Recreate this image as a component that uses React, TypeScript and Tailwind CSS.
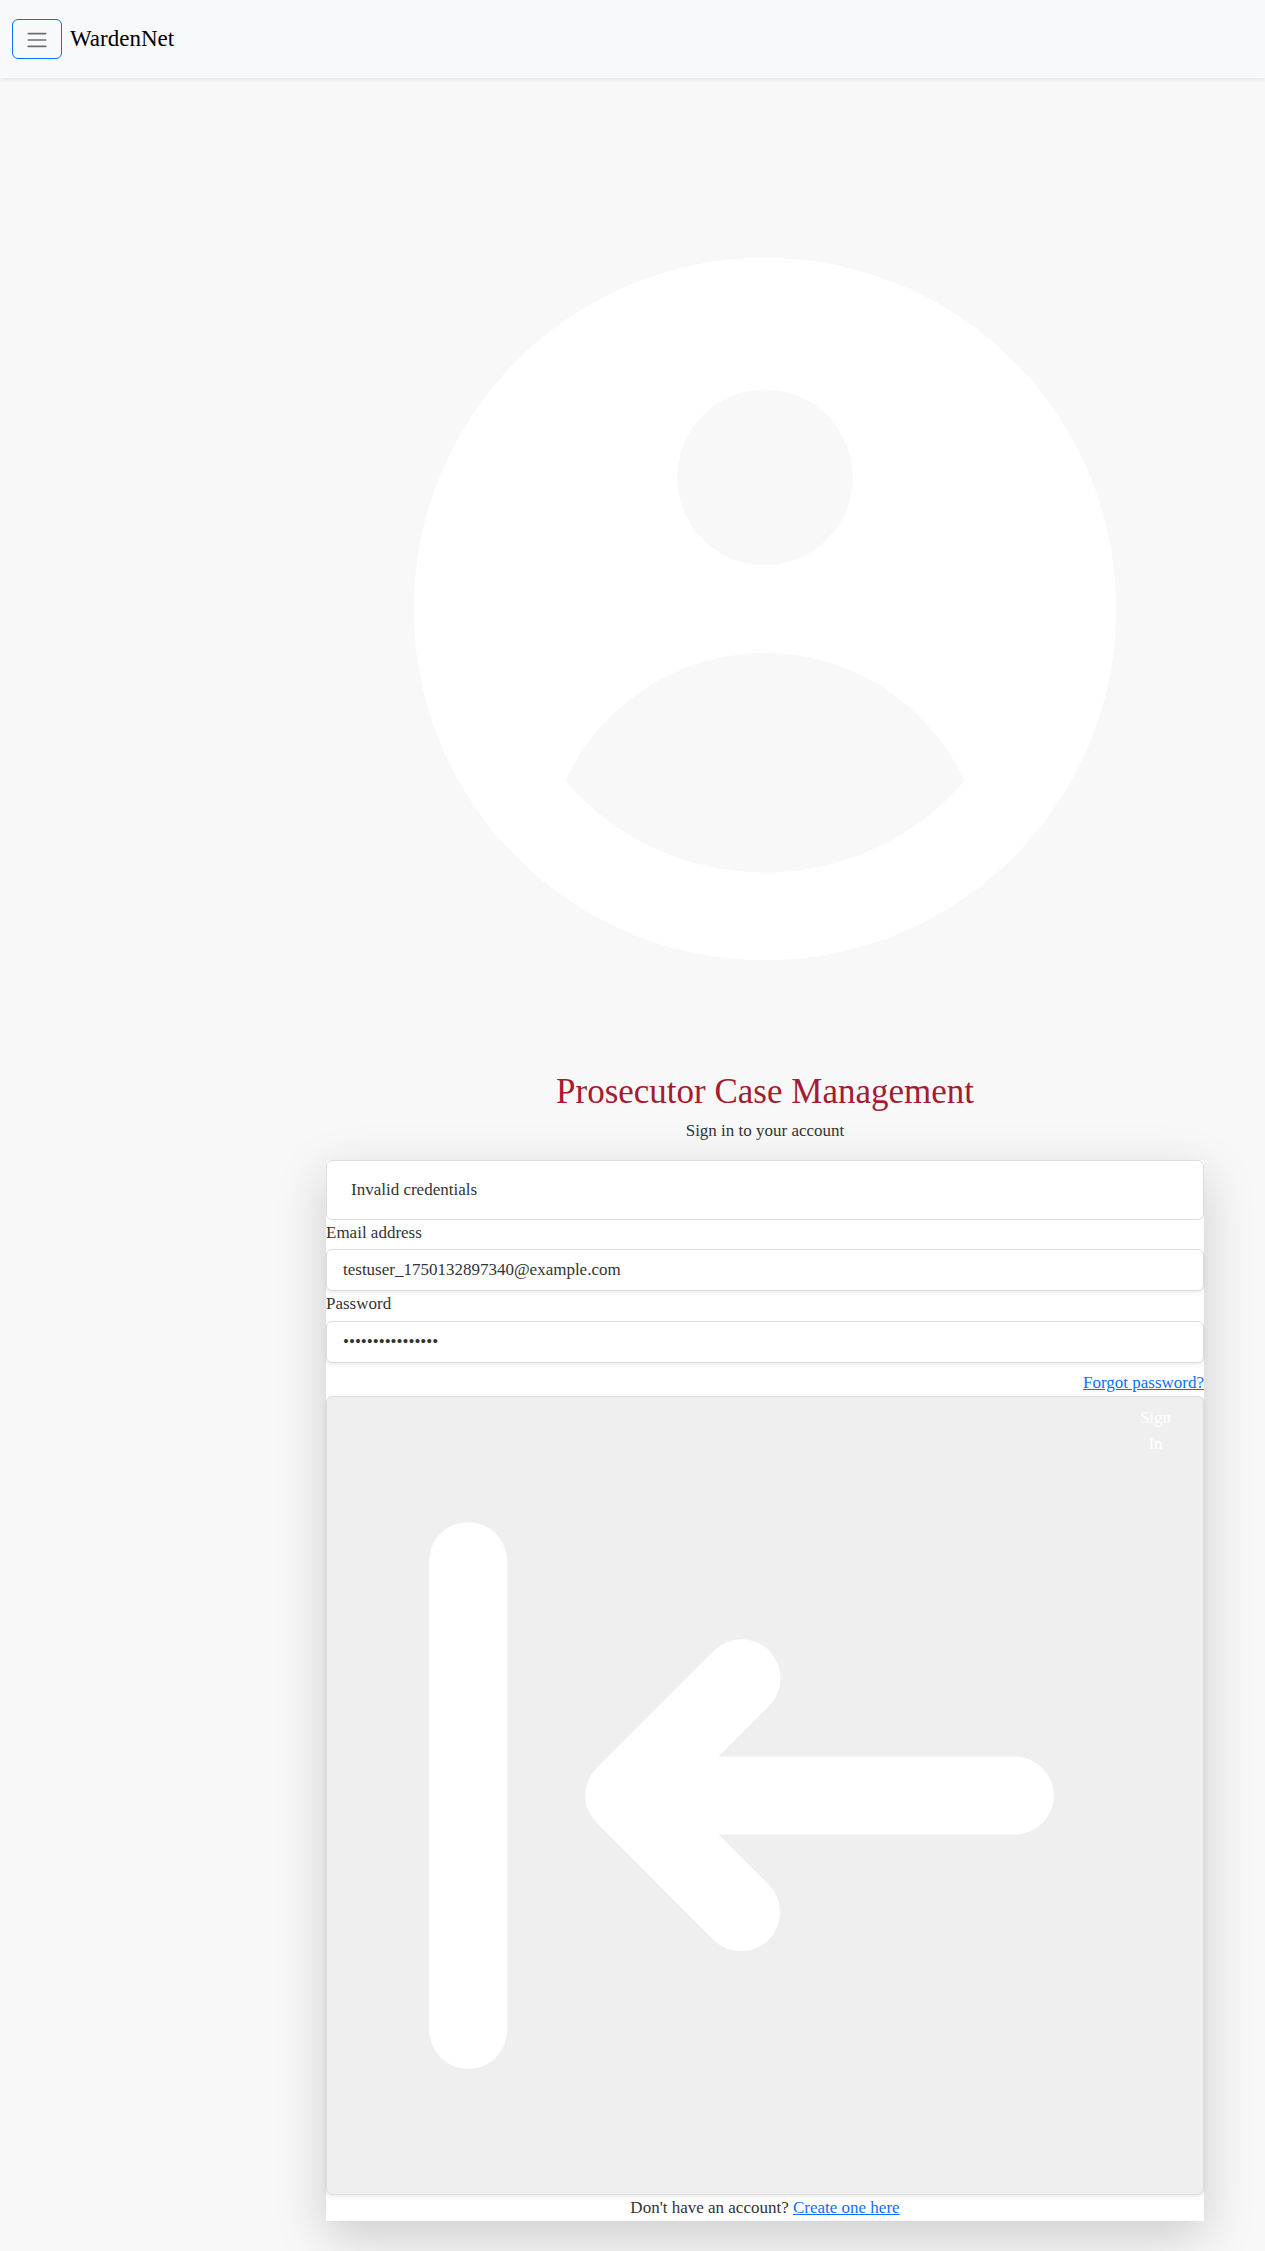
import { useState } from 'react';

const field =
  'block h-[42px] w-full rounded-md border border-[#dddddd] bg-white px-4 text-[17px] leading-[26px] text-[#333333] shadow-[0_2px_4px_rgba(0,0,0,0.075)] outline-none';

function Navbar() {
  return (
    <header className="relative z-10 flex h-[78px] items-center gap-2 bg-[#f8f9fb] px-3 shadow-[0_2px_4px_rgba(0,0,0,0.075)]">
      <button
        type="button"
        aria-label="Toggle navigation"
        className="flex h-10 items-center rounded-md border border-[#0d6efd] px-3 pt-0.5"
      >
        <svg viewBox="0 0 30 30" className="size-6" fill="none" stroke="#212529" strokeOpacity="0.65" strokeWidth="2" strokeLinecap="round">
          <path d="M4 7h22M4 15h22M4 23h22" />
        </svg>
      </button>
      <a href="#" className="text-[23px] leading-8 text-black">
        WardenNet
      </a>
    </header>
  );
}

function UserCircle() {
  return (
    <svg viewBox="0 0 20 20" fill="white" className="block w-full" aria-hidden="true">
      <path
        fillRule="evenodd"
        clipRule="evenodd"
        d="M18 10a8 8 0 11-16 0 8 8 0 0116 0zm-6-3a2 2 0 11-4 0 2 2 0 014 0zm-2 4a5 5 0 00-4.546 2.916A5.986 5.986 0 0010 16a5.986 5.986 0 004.546-2.084A5 5 0 0010 11z"
      />
    </svg>
  );
}

function SignInArrow() {
  return (
    <svg viewBox="0 0 20 20" fill="white" className="block min-w-0 flex-1" aria-hidden="true">
      <path
        fillRule="evenodd"
        clipRule="evenodd"
        d="M3 3a1 1 0 011 1v12a1 1 0 11-2 0V4a1 1 0 011-1zm7.707 3.293a1 1 0 010 1.414L9.414 9H17a1 1 0 110 2H9.414l1.293 1.293a1 1 0 01-1.414 1.414l-3-3a1 1 0 010-1.414l3-3a1 1 0 011.414 0z"
      />
    </svg>
  );
}

export default function App() {
  const [email, setEmail] = useState('testuser_1750132897340@example.com');
  const [password, setPassword] = useState('testpassword1234');

  return (
    <div className="min-h-screen overflow-x-hidden bg-[#f8f8f8] font-['Liberation_Serif',serif] text-[17px] leading-[26px] text-[#333333]">
      <Navbar />
      <main className="ml-[265px] px-[61px] pt-[92px] pb-[30px]">
        <UserCircle />
        <div className="pt-[22px] pb-4 text-center">
          <h1 className="text-[35px] leading-[44px] text-[#a51c30]">Prosecutor Case Management</h1>
          <p className="pt-1">Sign in to your account</p>
        </div>
        <form className="bg-white shadow-[0_16px_48px_rgba(0,0,0,0.175)]" onSubmit={(e) => e.preventDefault()}>
          <div role="alert" className="rounded-md border border-[#dddddd] px-6 py-4">
            Invalid credentials
          </div>
          <label htmlFor="email" className="block pb-[3px]">
            Email address
          </label>
          <input id="email" type="email" value={email} onChange={(e) => setEmail(e.target.value)} className={field} />
          <label htmlFor="password" className="block pb-1">
            Password
          </label>
          <input id="password" type="password" value={password} onChange={(e) => setPassword(e.target.value)} className={field} />
          <div className="flex justify-end pt-[7px]">
            <a href="#" className="text-[#0d6efd] underline">
              Forgot password?
            </a>
          </div>
          <button
            type="submit"
            className="flex w-full items-start rounded-md border border-[#dddddd] bg-[#efefef] px-6 py-2 text-white shadow-[0_2px_4px_rgba(0,0,0,0.075)]"
          >
            <SignInArrow />
            <span className="w-[47px] px-1 text-center">Sign In</span>
          </button>
          <p className="text-center">
            Don't have an account?{' '}
            <a href="#" className="text-[#0d6efd] underline">
              Create one here
            </a>
          </p>
        </form>
      </main>
    </div>
  );
}
